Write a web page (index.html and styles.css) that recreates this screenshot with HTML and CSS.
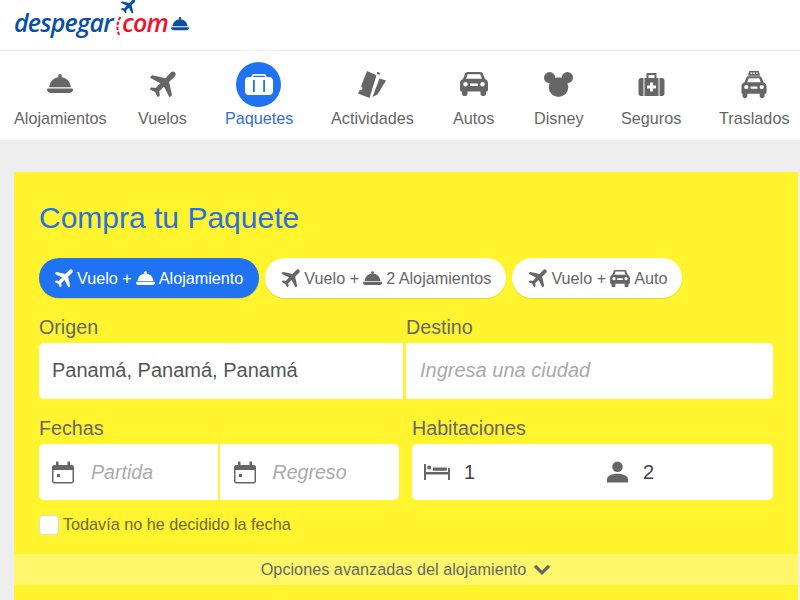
FILE: index.html
```html
<!DOCTYPE html>
<html>
<head>
    <title>Compra tu Paquete</title>
    <meta charset="utf-8">
    <link rel="stylesheet" href="styles.css">
</head>
<body>
    <svg class="sprites" width="0" height="0">
        <symbol id="i-bell" viewBox="0 0 26 20"><circle cx="13" cy="1.900" r="1.900"/><path d="M2.200 13.300C2.600 7.300 7.200 3 13 3s10.400 4.300 10.800 10.300z"/><path d="M1.300 14.600h23.400c.8 0 1.300.5 1.300 1.200 0 1.900-2 3.200-4 3.200H4c-2 0-4-1.300-4-3.200 0-.7.500-1.200 1.300-1.200z"/></symbol>
        <symbol id="i-plane" viewBox="0 0 28 28"><path d="M26.800 1.200c1.400 1.400.9 3.400-.4 4.700l-5.600 5.400 3 13.200c.1.400 0 .7-.3 1l-1.500 1.300c-.4.300-.9.200-1.100-.2l-5.300-10.300-5 4.800.6 3.700c.1.300 0 .6-.2.800l-1.100 1c-.4.400-1 .3-1.200-.2l-2.400-4.500-4.800-2.500c-.5-.2-.6-.9-.2-1.200l1.100-1c.2-.2.500-.3.800-.2l3.800.6 4.800-5L1.500 7.300c-.5-.2-.6-.8-.2-1.100l1.300-1.400c.3-.3.600-.4 1-.3l13.400 3 5.300-5.700c1.300-1.300 3.100-1.900 4.500-.6z"/></symbol>
        <symbol id="i-ticket" viewBox="0 0 28 27"><path d="M9 0l9.500 4.200-7 22.800L0 22.500l1.500-3.300c1.300.3 2.400-.3 2.800-1.300.4-1-.1-2.100-1.200-2.700z"/><path d="M21.500 7.500l6.500 2-8.500 14-5 2.500z"/><path d="M19.500.8l2.600 1.200-.8 2-2.600-1.200z"/></symbol>
        <symbol id="i-car" viewBox="0 0 28 24"><path fill-rule="evenodd" d="M7.800 0h12.400c1.300 0 2.300.7 2.800 1.900l2 5.100c1.800.6 3 2.200 3 4.100v6.900c0 .8-.7 1.500-1.500 1.500H26v2.600c0 1-.8 1.900-1.900 1.900h-1.700c-1 0-1.900-.8-1.900-1.900v-2.600H7.500v2.600c0 1-.8 1.900-1.900 1.900H3.900c-1 0-1.900-.8-1.900-1.900v-2.600h-.5C.7 19.500 0 18.800 0 18v-6.900c0-1.900 1.200-3.500 3-4.100l2-5.100C5.500.7 6.500 0 7.800 0zM7.800 2.200L6 6.700h16l-1.800-4.500zM5.500 10a2.300 2.300 0 1 0 0 4.600 2.300 2.300 0 0 0 0-4.600zM22.500 10a2.300 2.300 0 1 0 0 4.600 2.300 2.300 0 0 0 0-4.600zM10 11.500v2.500h8v-2.500z"/></symbol>
        <symbol id="i-mickey" viewBox="0 0 28 24"><circle cx="5.400" cy="5.400" r="5.400"/><circle cx="22.600" cy="5.400" r="5.400"/><circle cx="14" cy="14.500" r="9.500"/></symbol>
        <symbol id="i-aid" viewBox="0 0 26 23"><path fill-rule="evenodd" d="M8 0h10v5h5.500C25 5 26 6 26 7.500v13c0 1.500-1 2.500-2.500 2.500H2.500C1 23 0 22 0 20.500v-13C0 6 1 5 2.500 5H8zM10 2v3h6V2zM5 5h1v18H5zM20 5h1v18h-1zM11.500 9.500v3h-3v3h3v3h3v-3h3v-3h-3v-3z"/></symbol>
        <symbol id="i-taxi" viewBox="0 0 26 28"><path fill-rule="evenodd" d="M8 0h10l1.200 4.800H6.800zM9.500 1.500v1.500h1.700V1.500zM12.200 1.500v1.500h1.700V1.500zM15 1.500v1.500h1.700V1.500zM7.500 5.500h11c1.200 0 2.100.6 2.600 1.700l1.900 4.800c1.800.6 3 2.100 3 3.900v6.300c0 .8-.7 1.400-1.400 1.400h-.6v2.400c0 1-.8 1.900-1.900 1.900h-1.300c-1 0-1.900-.8-1.900-1.900v-2.400H6.100v2.400c0 1-.8 1.900-1.900 1.900H3c-1 0-1.900-.8-1.900-1.900v-2.400h-.7C.6 23.600 0 23 0 22.200v-6.300c0-1.800 1.200-3.300 3-3.900l1.900-4.800c.5-1.100 1.400-1.700 2.600-1.700zM7.600 7.500L6 11.700h14l-1.600-4.200zM5 14.500a2.200 2.200 0 1 0 0 4.400 2.200 2.200 0 0 0 0-4.400zM21 14.500a2.200 2.200 0 1 0 0 4.400 2.200 2.200 0 0 0 0-4.400zM9.500 16v2.300h7V16z"/></symbol>
        <symbol id="i-calendar" viewBox="0 0 22 22"><path fill-rule="evenodd" d="M4 0h2.500v3.500h9V0H18v3.500h1.800c1.200 0 2.200 1 2.200 2.200v14.100c0 1.200-1 2.200-2.200 2.200H2.200C1 22 0 21 0 19.800V5.700C0 4.500 1 3.500 2.200 3.500H4zM1.500 8.500v11.300c0 .4.300.7.700.7h17.600c.4 0 .7-.3.700-.7V8.500zM5 12.500h3v3H5z"/></symbol>
        <symbol id="i-bed" viewBox="0 0 26 16"><path d="M0 0h2v8h22V4h2v12h-2v-5.500H2V16H0zM3.200 3.500a2 2 0 1 1 4 0 2 2 0 0 1-4 0zM8.800 3.500h14v3.200h-14z"/></symbol>
        <symbol id="i-person" viewBox="0 0 22 22"><circle cx="11" cy="5.500" r="5.500"/><path d="M0 22v-3.500C0 15 5.500 12.800 11 12.800S22 15 22 18.500V22z"/></symbol>
    </svg>

    <header class="top">
        <div class="logo">
            <svg class="logo-plane" viewBox="0 0 28 28"><use href="#i-plane"/></svg>
            <span class="logo-blue">despegar</span><svg class="logo-arc" viewBox="0 0 7 20"><path d="M5.500 1C2 6.500 1.200 13 4.500 19.500" fill="none" stroke="#f0122d" stroke-width="2" stroke-dasharray="3.500 1.600"/></svg><span class="logo-red">com</span>
            <svg class="logo-bell"><use href="#i-bell"/></svg>
        </div>
    </header>

    <nav class="menu">
        <a class="menu-item item-1"><span class="menu-icon"><svg class="ic-bell"><use href="#i-bell"/></svg></span>Alojamientos</a>
        <a class="menu-item item-2"><span class="menu-icon"><svg class="ic-plane"><use href="#i-plane"/></svg></span>Vuelos</a>
        <a class="menu-item item-3 active"><span class="menu-icon">
            <span class="circle"><svg class="ic-bag" viewBox="0 0 28 21"><path fill-rule="evenodd" d="M9 0h10c1.400 0 2.500 1.100 2.500 2.500V3h3C26.400 3 28 4.600 28 6.500v11c0 1.900-1.600 3.500-3.500 3.500h-21C1.600 21 0 19.400 0 17.500v-11C0 4.600 1.600 3 3.500 3h3v-.5C6.500 1.100 7.600 0 9 0zM9 1.800c-.4 0-.7.300-.7.700V3h11.400v-.5c0-.4-.3-.7-.7-.7zM8 6v12h1.800V6zM18.200 6v12H20V6z"/></svg></span>
        </span>Paquetes</a>
        <a class="menu-item item-4"><span class="menu-icon"><svg class="ic-ticket"><use href="#i-ticket"/></svg></span>Actividades</a>
        <a class="menu-item item-5"><span class="menu-icon"><svg class="ic-car"><use href="#i-car"/></svg></span>Autos</a>
        <a class="menu-item item-6"><span class="menu-icon"><svg class="ic-mickey"><use href="#i-mickey"/></svg></span>Disney</a>
        <a class="menu-item item-7"><span class="menu-icon"><svg class="ic-aid"><use href="#i-aid"/></svg></span>Seguros</a>
        <a class="menu-item item-8"><span class="menu-icon"><svg class="ic-taxi"><use href="#i-taxi"/></svg></span>Traslados</a>
    </nav>

    <main class="page">
        <section class="box">
            <h1>Compra tu Paquete</h1>

            <div class="pills">
                <a class="pill pill-on"><svg class="p-plane"><use href="#i-plane"/></svg>Vuelo +<svg class="p-bell"><use href="#i-bell"/></svg>Alojamiento</a>
                <a class="pill"><svg class="p-plane"><use href="#i-plane"/></svg>Vuelo +<svg class="p-bell"><use href="#i-bell"/></svg>2 Alojamientos</a>
                <a class="pill pill-last"><svg class="p-plane"><use href="#i-plane"/></svg>Vuelo +<svg class="p-car"><use href="#i-car"/></svg>Auto</a>
            </div>

            <div class="row row-places">
                <div class="field">
                    <label>Origen</label>
                    <div class="input input-left filled">Panamá, Panamá, Panamá</div>
                </div>
                <div class="field">
                    <label>Destino</label>
                    <div class="input input-right placeholder">Ingresa una ciudad</div>
                </div>
            </div>

            <div class="row row-dates">
                <div class="field">
                    <label>Fechas</label>
                    <div class="dates">
                        <div class="input input-left placeholder date"><svg class="cal"><use href="#i-calendar"/></svg>Partida</div>
                        <div class="input input-right placeholder date"><svg class="cal"><use href="#i-calendar"/></svg>Regreso</div>
                    </div>
                </div>
                <div class="field">
                    <label class="label-rooms">Habitaciones</label>
                    <div class="input rooms">
                        <span class="room-part"><svg class="bed"><use href="#i-bed"/></svg>1</span>
                        <span class="room-part"><svg class="person"><use href="#i-person"/></svg>2</span>
                    </div>
                </div>
            </div>

            <div class="check-row"><span class="check"></span>Todavía no he decidido la fecha</div>

            <div class="advanced">Opciones avanzadas del alojamiento
                <svg class="chevron" viewBox="0 0 18 11"><path d="M2 1.800l7 7 7-7" fill="none" stroke="#666" stroke-width="3.200"/></svg>
            </div>
        </section>
    </main>
</body>
</html>
```

FILE: styles.css
```css
* {
    box-sizing: border-box;
}
body {
    margin: 0;
    height: 600px;
    overflow: hidden;
    background-color: #eee;
    font-family: "Liberation Sans", Arial, sans-serif;
    color: #666;
}
svg {
    fill: currentColor;
}
.sprites {
    display: block;
    height: 0;
}

/* cabecera */
.top {
    height: 51px;
    background-color: #fff;
    border-bottom: 1px solid #eee;
    padding: 7px 0 0 14px;
}
.logo {
    position: relative;
    display: flex;
    align-items: flex-start;
    height: 36px;
    font-family: "Open Sans", "Liberation Sans", sans-serif;
    font-size: 25px;
    line-height: 30px;
    font-weight: 600;
    font-style: italic;
}
.logo-blue {
    color: #0a4ea6;
    width: 100px;
    letter-spacing: -0.8px;
}
.logo-red {
    color: #f0122d;
    width: 45px;
    letter-spacing: -0.8px;
}
.logo-plane {
    position: absolute;
    left: 106px;
    top: -8px;
    width: 16px;
    height: 15px;
    color: #0a4ea6;
}
.logo-arc {
    flex: none;
    width: 7px;
    height: 20px;
    margin: 9px 0 0 1px;
}
.logo-bell {
    width: 18px;
    height: 14px;
    margin: 10px 0 0 4px;
    color: #0a4ea6;
}

/* menu */
.menu {
    position: relative;
    height: 89px;
    background-color: #fff;
}
.menu-item {
    position: absolute;
    top: 10px;
    display: flex;
    flex-direction: column;
    align-items: center;
    font-size: 16.2px;
    line-height: 18px;
    color: #666;
    white-space: nowrap;
}
.item-1 { left: 14px; }
.item-2 { left: 138px; }
.item-3 { left: 225px; }
.item-4 { left: 331px; }
.item-5 { left: 453px; }
.item-6 { left: 534px; }
.item-7 { left: 621px; }
.item-8 { left: 719px; }
.menu-icon {
    display: flex;
    align-items: center;
    justify-content: center;
    height: 46px;
    margin-bottom: 2px;
}
.active {
    color: #2e6fdc;
}
.circle {
    display: flex;
    align-items: center;
    justify-content: center;
    width: 45px;
    height: 45px;
    margin-left: -1px;
    border-radius: 50%;
    background-color: #1f72f2;
}
.ic-bag { width: 28px; height: 21px; color: #fff; }
.ic-bell { width: 26px; height: 20px; }
.ic-plane { width: 27px; height: 27px; }
.ic-ticket { width: 28px; height: 27px; }
.ic-car { width: 28px; height: 24px; }
.ic-mickey { width: 29px; height: 25px; }
.ic-aid { width: 27px; height: 23px; }
.ic-taxi { width: 26px; height: 27px; }

/* formulario */
.page {
    padding: 32px 2px 0 14px;
}
.box {
    height: 428px;
    background-color: #fff42e;
    padding-top: 29px;
}
h1 {
    margin: 0 0 23px 25px;
    font-size: 30px;
    line-height: 34px;
    font-weight: normal;
    color: #2b6fe0;
}
.pills {
    display: flex;
    gap: 6px;
    margin-left: 25px;
}
.pill {
    display: flex;
    align-items: center;
    gap: 3px;
    height: 40px;
    padding: 0 15px 0 16px;
    border-radius: 20px;
    background-color: #fff;
    font-size: 16.2px;
    box-shadow: 0 1px 1px rgba(0, 0, 0, 0.12);
    white-space: pre;
}
.pill-on {
    padding: 0 16px 0 15px;
    background-color: #1f72f2;
    color: #fff;
}
.pill-last {
    padding-right: 14px;
}
.p-plane { width: 19px; height: 19px; margin-right: 1px; }
.p-bell { width: 19px; height: 15px; margin: 0 1px; }
.p-car { width: 20px; height: 17px; margin: 0 1px; }
.row {
    display: flex;
    margin-left: 25px;
    width: 734px;
}
.row-places {
    margin-top: 18px;
    gap: 3px;
}
.row-places .field {
    width: 367px;
}
.row-places .field:first-child {
    width: 364px;
}
.row-places .input {
    padding-bottom: 2px;
}
.row-dates {
    margin-top: 18px;
    gap: 13px;
}
.row-dates .field:first-child {
    width: 360px;
}
.row-dates .field:last-child {
    width: 361px;
}
label {
    display: block;
    font-size: 19.7px;
    line-height: 23px;
    margin-bottom: 4px;
}
.input {
    height: 56px;
    display: flex;
    align-items: center;
    background-color: #fff;
    font-size: 20px;
    padding-left: 14px;
    color: #555;
    border-radius: 5px;
}
.filled {
    padding-left: 13px;
}
.input-left {
    border-radius: 5px 0 0 5px;
}
.input-right {
    border-radius: 0 5px 5px 0;
}
.placeholder {
    color: #aaa;
    font-style: italic;
}
.dates {
    display: flex;
    gap: 2px;
}
.date {
    flex: 1;
    gap: 17px;
    padding-left: 13px;
    font-size: 19.6px;
}
.date.input-right {
    padding-left: 14px;
}
.cal {
    width: 22px;
    height: 23px;
    color: #666;
}
.rooms {
    padding-left: 12px;
}
.room-part {
    display: flex;
    flex: none;
    align-items: center;
    width: 183px;
    color: #444;
}
.bed {
    width: 26px;
    height: 16px;
    margin-right: 14px;
    color: #666;
}
.person {
    width: 21px;
    height: 22px;
    margin-right: 15px;
    color: #666;
}
.check-row {
    display: flex;
    align-items: center;
    gap: 4px;
    margin: 14px 0 0 25px;
    height: 21px;
    font-size: 16.2px;
    color: #6d6a36;
}
.check {
    width: 20px;
    height: 20px;
    background-color: #fff;
    border: 1px solid #ddd;
    border-radius: 4px;
}
.advanced {
    display: flex;
    align-items: center;
    justify-content: center;
    gap: 7px;
    height: 31px;
    margin-top: 19px;
    background-color: #fff76b;
    font-size: 16.25px;
    color: #666;
}
.chevron {
    width: 18px;
    height: 11px;
}
```
